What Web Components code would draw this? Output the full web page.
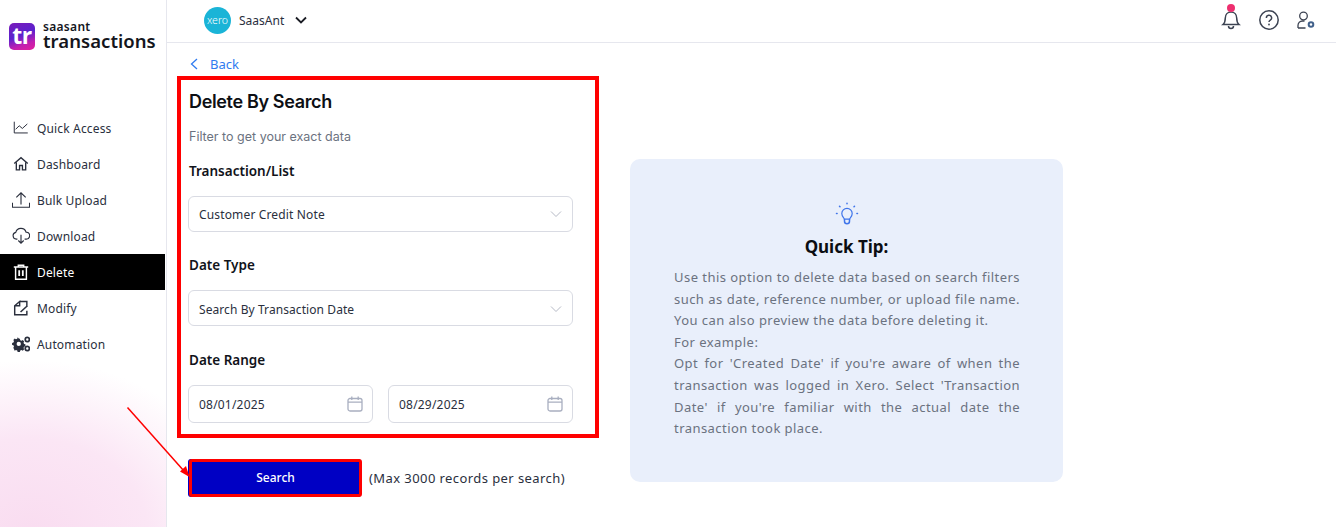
<!DOCTYPE html>
<html lang="en"><head><meta charset="utf-8"><title>Delete By Search</title>
<style>
html,body{margin:0;height:527px;overflow:hidden;background:#fff;font-family:"Noto Sans",sans-serif;color:#1f2430}
</style></head><body>
<sa-app></sa-app>
<script>
function def(name, html){
  customElements.define(name, class extends HTMLElement{
    constructor(){super();const r=this.attachShadow({mode:'open'});r.innerHTML=typeof html==='function'?html(this):html;}
  });
}
const icons={
 quick:'<path d="M2.500 3v12.500h15" stroke-width="1.100"/><path d="M4 11.500l4-4 3.500 3 5.500-5" stroke-width="1.100"/>',
 home:'<path d="M2.500 9.500L10 3l7.500 6.500" stroke-width="1.500"/><path d="M4.800 8v8.500h3.600v-4.800h3.200v4.800h3.600V8" stroke-width="1.500"/>',
 upload:'<path d="M.5 13v5h19v-5M10 15V2M4.800 7L10 2l5.200 5" stroke-width="1.250"/>',
 download:'<path d="M6 13.500H4.800a3.800 3.800 0 0 1-.6-7.500 5.900 5.900 0 0 1 11.400-.3 3.900 3.900 0 0 1 .2 7.800H14" stroke-width="1.250"/><path d="M10 8.500v9.500M7 15l3 3 3-3" stroke-width="1.250"/>',
 del:'<path d="M2 4.500h16M7 4.500V2.500h6v2M4 4.500V18h12V4.500" stroke-width="1.600"/><path d="M8 8v6.500M12 8v6.500" stroke-width="2"/>',
 modify:'<path d="M9 2.800h7.500v6M16.500 13v4.500H3V7.500L8.500 2.800V7.500H3" stroke-width="1.600"/><path d="M9.500 14.500l7-6.500" stroke-width="1.700"/>',
 auto:'<g fill="currentColor" stroke="none"><path fill-rule="evenodd" d="M7 4.500l1.200.2.500 1.500 1.400.6 1.400-.7 1.500 1.500-.7 1.400.6 1.400 1.500.5v2.200l-1.500.5-.6 1.400.7 1.400-1.500 1.500-1.400-.7-1.400.6-.5 1.500H5.800l-.5-1.500-1.400-.6-1.400.7L1 14.800l.7-1.400-.6-1.400L-.4 11.500V9.300l1.500-.5.6-1.400L1 6l1.500-1.500 1.400.7 1.400-.6.500-1.500zM7 8a2.400 2.400 0 1 0 0 4.800A2.400 2.400 0 0 0 7 8z" transform="translate(.5 -.5)"/></g><circle cx="17" cy="5" r="2.300" stroke-width="1.900"/><circle cx="17" cy="15" r="2.300" stroke-width="1.900"/>'
};
def('sa-nav-item',el=>`<style>
:host{display:flex;align-items:center;height:36px;padding-left:12px;gap:7px;font-size:12px;letter-spacing:.15px;color:#2a2f3d}
:host([active]){background:#000;color:#fff}
svg{width:18px;height:18px;flex:none;fill:none;stroke:currentColor}
</style><svg viewBox="0 0 20 20">${icons[el.getAttribute('icon')]}</svg><slot></slot>`);
def('sa-logo',`<style>
:host{display:flex;align-items:center;gap:8px;padding:20px 0 0 9px;height:32px}
.t{width:26px;height:27px;border-radius:5px;background:linear-gradient(160deg,#7a1bb8 0%,#5a22cf 45%,#c21fb0 75%,#e3209c 100%);color:#fff;font:700 23px/25px "Open Sans",sans-serif;text-align:center;letter-spacing:-.5px;flex:none}
.w{display:flex;flex-direction:column;color:#14161c}
.a{font:600 12px/9px "Noto Sans",sans-serif;letter-spacing:.3px}
.b{font:600 18.500px/19px "Noto Sans",sans-serif;letter-spacing:.05px}
</style><div class="t">tr</div><div class="w"><span class="a">saasant</span><span class="b">transactions</span></div>`);
def('sa-sidebar',`<style>
:host{display:block;width:166px;flex:none;border-right:1px solid #e6e7ee;height:527px;
background:radial-gradient(ellipse 215px 175px at 30px 535px,#f9dcf0 0%,#fbe6f5 55%,#fff 100%)}
nav{display:flex;flex-direction:column;margin-top:58px;width:165px}
</style><sa-logo></sa-logo><nav>
<sa-nav-item icon="quick">Quick Access</sa-nav-item>
<sa-nav-item icon="home">Dashboard</sa-nav-item>
<sa-nav-item icon="upload">Bulk Upload</sa-nav-item>
<sa-nav-item icon="download">Download</sa-nav-item>
<sa-nav-item icon="del" active>Delete</sa-nav-item>
<sa-nav-item icon="modify">Modify</sa-nav-item>
<sa-nav-item icon="auto">Automation</sa-nav-item>
</nav>`);
def('sa-header',`<style>
:host{display:flex;align-items:center;box-sizing:border-box;height:43px;border-bottom:1px solid #e6e7ee;padding:0 21px 2px 37px;font-size:12px;color:#2a2f3d}
.x{width:27px;height:27px;border-radius:50%;background:#1ab4d7;color:#fff;font:300 10.500px/27px "Noto Sans",sans-serif;text-align:center;margin-right:8px}
.c{margin-left:11px;width:12px;height:8px;fill:none;stroke:#1a1c24;stroke-width:1.800}
.r{margin-left:auto;display:flex;align-items:center;gap:18px}
.bell{position:relative;display:block;width:20px;height:24px;margin:0 0 5px 0}
.bell i{position:absolute;left:6px;top:-1.500px;width:8px;height:8px;border-radius:50%;background:#ee2f6f}
svg.i{display:block;fill:none;stroke:#3c4352;stroke-width:1.500}
</style>
<div class="x">xero</div><span>SaasAnt</span>
<svg class="c" viewBox="0 0 12 8"><path d="M1 1.500l5 5 5-5"/></svg>
<div class="r">
<span class="bell"><svg class="i" width="20" height="24" viewBox="0 0 20 24"><path d="M2 18.500c1.800-1.500 2.300-3 2.300-6.500 0-3.500 2.300-6 5.700-6s5.700 2.500 5.700 6c0 3.500.5 5 2.300 6.500z"/><path d="M7.500 20a2.500 2.500 0 0 0 5 0"/></svg><i></i></span>
<svg class="i" width="20" height="20" viewBox="0 0 20 20"><circle cx="10" cy="10" r="9.200"/><path d="M7.400 7.900a2.600 2.600 0 1 1 3.900 2.200c-.9.500-1.300 1-1.300 2"/><circle cx="10" cy="14.500" r=".9" fill="#3c4352" stroke="none"/></svg>
<svg class="i" style="stroke-width:1.300" width="18" height="18" viewBox="0 0 18 18"><circle cx="6.500" cy="5" r="3.800"/><path d="M1 17v-2.500c0-2.500 2-4.500 4.500-4.500h2M1 17h7.500"/><circle cx="14" cy="13.500" r="2.300" stroke="#41608a" stroke-width="2"/></svg>
</div>`);
def('sa-select',`<style>
:host{display:flex;align-items:center;justify-content:space-between;box-sizing:border-box;height:36px;border:1px solid #d9dbe3;border-radius:6px;padding:0 10px;font-size:12px;letter-spacing:.15px;color:#2a2f3d;background:#fff}
:host([low]){padding-top:2px;letter-spacing:.08px}
svg{width:12px;height:8px;fill:none;stroke:#b6bac6;stroke-width:1}
</style><slot></slot><svg viewBox="0 0 12 8"><path d="M1 1.500l5 5 5-5"/></svg>`);
def('sa-date',`<style>
:host{display:flex;align-items:center;justify-content:space-between;box-sizing:border-box;width:185px;height:38px;border:1px solid #d9dbe3;border-radius:6px;padding:0 9px 0 10px;font-size:12px;letter-spacing:.2px;color:#2a2f3d;background:#fff}
svg{width:16px;height:16px;fill:none;stroke:#a9afc0;stroke-width:1.300}
</style><slot></slot><svg viewBox="0 0 16 16"><rect x="1" y="2.500" width="14" height="12.500" rx="2"/><path d="M1 6.200h14M4.800 .5v3.500M11.200 .5v3.500"/></svg>`);
def('sa-form',`<style>
:host{display:block;box-sizing:border-box;width:422px;height:362px;border:4px solid #ff0000;padding:0 22px 0 7px}
h1{font:600 18px/24px Inter,sans-serif;letter-spacing:-.35px;color:#0d0f14;margin:10px 0 0 1px}
p{font:400 12.500px/16px Inter,sans-serif;color:#6b7280;margin:15px 0 0 1px}
label{display:block;font:600 13.500px/18px "Noto Sans",sans-serif;color:#11131a;margin-left:1px!important}
.l1{margin:17px 0 16px}
.l2{margin:24px 0 16px}
.l3{margin:25px 0 16px}
.d{display:flex;gap:15px}
</style>
<h1>Delete By Search</h1><p>Filter to get your exact data</p>
<label class="l1">Transaction/List</label><sa-select>Customer Credit Note</sa-select>
<label class="l2">Date Type</label><sa-select low>Search By Transaction Date</sa-select>
<label class="l3">Date Range</label><div class="d"><sa-date>08/01/2025</sa-date><sa-date>08/29/2025</sa-date></div>`);
def('sa-search',`<style>
:host{display:flex;align-items:center;margin:21px 0 0 12px;font-size:13px;letter-spacing:.42px;color:#2a2f3d;position:relative}
.b{box-sizing:border-box;width:173px;height:38px;margin-right:7px;border:3px solid #f00;border-radius:3px;background:#0000c4;color:#fff;font:500 12px/32px "Noto Sans",sans-serif;letter-spacing:0;text-align:center;box-shadow:-1px 0 0 0 #0000c4}
</style><div class="b">Search</div><span><slot></slot></span>`);
def('sa-tip',`<style>
:host{display:block;box-sizing:border-box;width:433px;height:323px;border-radius:10px;background:#e9effb;padding:43px 43px 0 44px;text-align:center}
svg{display:block;margin:0 auto;width:24px;height:24px;fill:none;stroke:#3f74ea;stroke-width:1.500;stroke-linecap:round;stroke-linejoin:round}
h2{font:700 17px/23px "Noto Sans",sans-serif;color:#0b0d12;margin:9px 0 9px -1px}
div{font:400 13px/21.600px "Noto Sans",sans-serif;letter-spacing:.45px;color:#6b7280;text-align:justify}
</style><svg viewBox="0 0 24 24"><path d="M8.500 18c0-2-3-3-3-7a6.500 6.500 0 0 1 13 0c0 4-3 5-3 7z" transform="translate(2.400 2.700) scale(.8)"/><path d="M9.500 17.500v1.800a2.500 2.500 0 0 0 5 0v-1.800"/><path d="M12 1.200v.6M4.500 4.300l.5.500M19.500 4.300l-.5.500M1.500 11.500h.6M21.900 11.500h.6"/></svg>
<h2>Quick Tip:</h2><div>Use this option to delete data based on search filters such as date, reference number, or upload file name. You can also preview the data before deleting it.<br>For example:<br>Opt for 'Created Date' if you're aware of when the transaction was logged in Xero. Select 'Transaction Date' if you're familiar with the actual date the transaction took place.</div>`);
def('sa-app',`<style>
:host{display:flex;width:1336px;height:527px;position:relative;overflow:hidden}
main{flex:1;min-width:0;display:flex;flex-direction:column}
.body{display:flex;flex:1}
.left{width:463px;flex:none;padding-left:10px;box-sizing:border-box}
.back{display:flex;align-items:center;gap:12px;height:33px;box-sizing:border-box;padding:9px 0 0 13px;color:#2f7bf0;font-size:13px}
.back svg{width:8px;height:12px;fill:none;stroke:#2f7bf0;stroke-width:1.300}
.right{padding-top:116px}
.arrow{position:absolute;left:120px;top:400px;width:80px;height:85px;pointer-events:none}
</style>
<sa-sidebar></sa-sidebar>
<main><sa-header></sa-header><div class="body">
<div class="left"><div class="back"><svg viewBox="0 0 8 12"><path d="M7 1L1.500 6 7 11"/></svg><span>Back</span></div><sa-form></sa-form><sa-search>(Max 3000 records per search)</sa-search></div>
<div class="right"><sa-tip></sa-tip></div>
</div></main>
<svg class="arrow" viewBox="0 0 80 85"><path d="M7.500 7.500L64 71" stroke="#f00" stroke-width="1.500"/><path d="M69.500 77L60 71.500l6-5.500z" fill="#f00"/></svg>`);
</script></body></html>
